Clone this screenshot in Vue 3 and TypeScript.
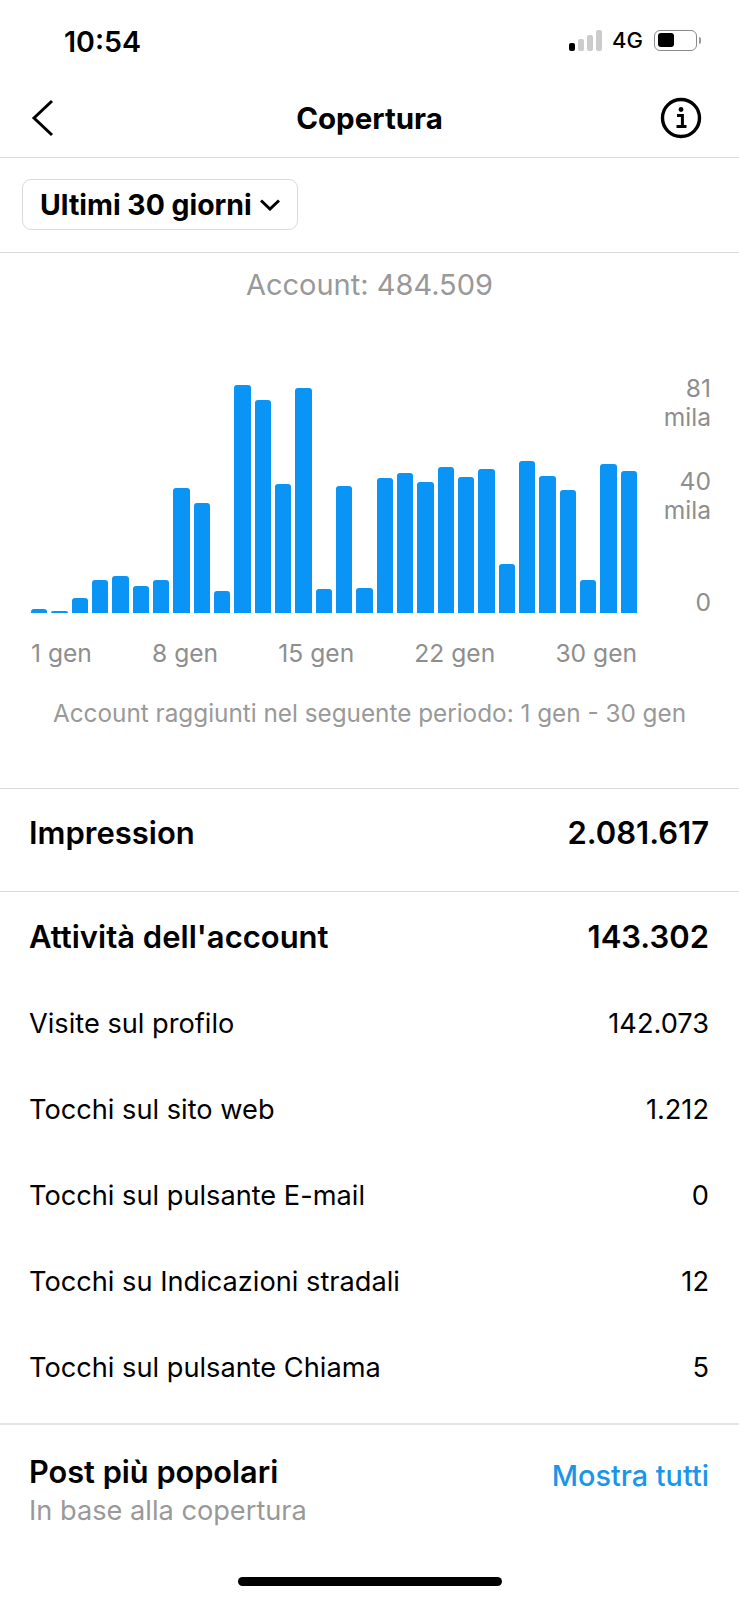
<script setup lang="ts">
const bars: number[] = [
  4, 2, 15, 33, 37, 27, 33, 125, 110, 22, 228, 213, 129, 225, 24,
  127, 25, 135, 140, 131, 146, 136, 144, 49, 152, 137, 123, 33, 149, 142,
]
const days = ['1 gen', '8 gen', '15 gen', '22 gen', '30 gen']
const rows = [
  { label: 'Visite sul profilo', value: '142.073' },
  { label: 'Tocchi sul sito web', value: '1.212' },
  { label: 'Tocchi sul pulsante E-mail', value: '0' },
  { label: 'Tocchi su Indicazioni stradali', value: '12' },
  { label: 'Tocchi sul pulsante Chiama', value: '5' },
]
</script>

<template>
  <div class="screen">
    <div class="status">
      <span class="time">10:54</span>
      <div class="status-right">
        <div class="signal">
          <i class="on" style="height: 8px"></i>
          <i style="height: 12px"></i>
          <i style="height: 16px"></i>
          <i style="height: 21px"></i>
        </div>
        <span class="net">4G</span>
        <div class="battery"><div class="level"></div></div>
        <div class="tip"></div>
      </div>
    </div>

    <div class="nav">
      <svg class="back" width="24" height="38" viewBox="0 0 24 38">
        <path d="M21 2 L3 19 L21 36" fill="none" stroke="#000" stroke-width="3" />
      </svg>
      <span class="title">Copertura</span>
      <svg class="info" width="42" height="42" viewBox="0 0 42 42">
        <circle cx="21" cy="21" r="18.5" fill="none" stroke="#000" stroke-width="3.4" />
        <circle cx="21" cy="12.5" r="2.4" fill="#000" />
        <path d="M17 18.5h5.4v10.5M16.5 29.5h10" fill="none" stroke="#000" stroke-width="3" />
      </svg>
    </div>

    <div class="filter-bar">
      <div class="filter">
        <span>Ultimi 30 giorni</span>
        <svg width="20" height="12" viewBox="0 0 20 12">
          <path d="M1 1.5 L10 10 L19 1.5" fill="none" stroke="#000" stroke-width="3" />
        </svg>
      </div>
    </div>

    <div class="chart-section">
      <div class="total">Account: 484.509</div>
      <div class="chart">
        <div class="plot">
          <div class="bars">
            <div
              v-for="(h, i) in bars"
              :key="i"
              class="bar"
              :style="{ height: h + 'px' }"
            ></div>
          </div>
          <div class="days">
            <span v-for="d in days" :key="d">{{ d }}</span>
          </div>
        </div>
        <div class="y-axis">
          <div class="tick">81<br />mila</div>
          <div class="tick">40<br />mila</div>
          <div class="tick">0</div>
        </div>
      </div>
      <div class="caption">Account raggiunti nel seguente periodo: 1 gen - 30 gen</div>
    </div>

    <div class="summary">
      <span>Impression</span>
      <span>2.081.617</span>
    </div>

    <div class="activity">
      <div class="activity-head">
        <span>Attività dell'account</span>
        <span>143.302</span>
      </div>
      <div v-for="r in rows" :key="r.label" class="row">
        <span>{{ r.label }}</span>
        <span>{{ r.value }}</span>
      </div>
    </div>

    <div class="popular">
      <div>
        <div class="popular-title">Post più popolari</div>
        <div class="popular-sub">In base alla copertura</div>
      </div>
      <span class="show-all">Mostra tutti</span>
    </div>

    <div class="home-indicator"></div>
  </div>
</template>

<style scoped>
.screen {
  position: relative;
  width: 739px;
  height: 1600px;
  overflow: hidden;
  background: #fff;
  color: #000;
  font-family: Inter, "Liberation Sans", sans-serif;
}

.status {
  height: 82px;
  display: flex;
  justify-content: space-between;
  align-items: center;
  padding: 0 38px 0 64px;
}

.time {
  font-size: 28.6px;
  font-weight: 600;
}

.status-right {
  display: flex;
  align-items: center;
  margin-bottom: 2px;
}

.signal {
  display: flex;
  align-items: flex-end;
  gap: 3px;
  height: 21px;
  margin-right: 10px;
}

.signal i {
  width: 6px;
  border-radius: 2px;
  background: #ccc;
}

.signal i.on {
  background: #000;
}

.net {
  font-size: 22px;
  font-weight: 500;
  margin-right: 11px;
}

.battery {
  width: 43px;
  height: 21px;
  box-sizing: border-box;
  border: 1.5px solid #8a8a8a;
  border-radius: 6px;
  padding: 2.5px;
}

.level {
  width: 16px;
  height: 100%;
  background: #000;
  border-radius: 3px;
}

.tip {
  width: 2px;
  height: 7px;
  margin-left: 2px;
  background: #999;
  border-radius: 0 2px 2px 0;
}

.nav {
  height: 76px;
  box-sizing: border-box;
  display: flex;
  justify-content: space-between;
  align-items: center;
  padding: 0 37px 4px 31px;
  border-bottom: 1px solid #dbdbdb;
  position: relative;
}

.title {
  position: absolute;
  left: 0;
  right: 0;
  top: 18px;
  text-align: center;
  font-size: 29.5px;
  font-weight: 700;
}

.filter-bar {
  height: 95px;
  box-sizing: border-box;
  padding: 21px 22px;
  border-bottom: 1px solid #dbdbdb;
}

.filter {
  width: 276px;
  height: 51px;
  box-sizing: border-box;
  display: flex;
  align-items: center;
  gap: 8px;
  padding-left: 17px;
  border: 1.5px solid #dbdbdb;
  border-radius: 9px;
  font-size: 28.4px;
  font-weight: 700;
  white-space: nowrap;
}

.chart-section {
  height: 536px;
  box-sizing: border-box;
  padding-top: 14px;
  border-bottom: 1px solid #dbdbdb;
}

.total {
  text-align: center;
  font-size: 29px;
  line-height: 36px;
  color: #999;
}

.chart {
  display: flex;
  margin-top: 80px;
  padding-left: 31px;
}

.plot {
  width: 606px;
}

.bars {
  height: 230px;
  display: flex;
  align-items: flex-end;
  justify-content: space-between;
}

.bar {
  width: 16.4px;
  background: #0a94f5;
  border-radius: 3px 3px 0 0;
}

.days {
  display: flex;
  justify-content: space-between;
  margin-top: 25px;
  font-size: 24.6px;
  line-height: 30px;
  color: #8e8e8e;
}

.y-axis {
  width: 74px;
  margin-top: -9px;
  text-align: right;
  font-size: 24.6px;
  line-height: 29px;
  color: #8e8e8e;
}

.tick {
  height: 93px;
}

.tick:last-child {
  height: 29px;
  margin-top: 28px;
}

.caption {
  margin-top: 30px;
  text-align: center;
  font-size: 24.3px;
  line-height: 30px;
  color: #999;
}

.summary,
.activity-head {
  display: flex;
  justify-content: space-between;
  align-items: center;
  font-size: 31px;
  font-weight: 600;
}

.summary {
  height: 103px;
  box-sizing: border-box;
  padding: 0 30px 16px 29px;
  border-bottom: 1px solid #dbdbdb;
}

.activity {
  height: 533px;
  box-sizing: border-box;
  padding: 0 30px 0 29px;
  border-bottom: 2px solid #e6e6e6;
}

.activity-head {
  height: 88px;
}

.row {
  height: 86px;
  display: flex;
  justify-content: space-between;
  align-items: center;
  font-size: 27.2px;
}

.popular {
  display: flex;
  justify-content: space-between;
  align-items: flex-start;
  padding: 28px 30px 0 29px;
}

.popular-title {
  font-size: 30.7px;
  font-weight: 600;
  line-height: 38px;
}

.popular-sub {
  font-size: 27.2px;
  line-height: 40px;
  color: #999;
}

.show-all {
  margin-top: 6px;
  font-size: 28.8px;
  line-height: 34px;
  font-weight: 500;
  color: #1a96e8;
}

.home-indicator {
  position: absolute;
  left: 238px;
  bottom: 14px;
  width: 264px;
  height: 9px;
  border-radius: 5px;
  background: #000;
}
</style>
